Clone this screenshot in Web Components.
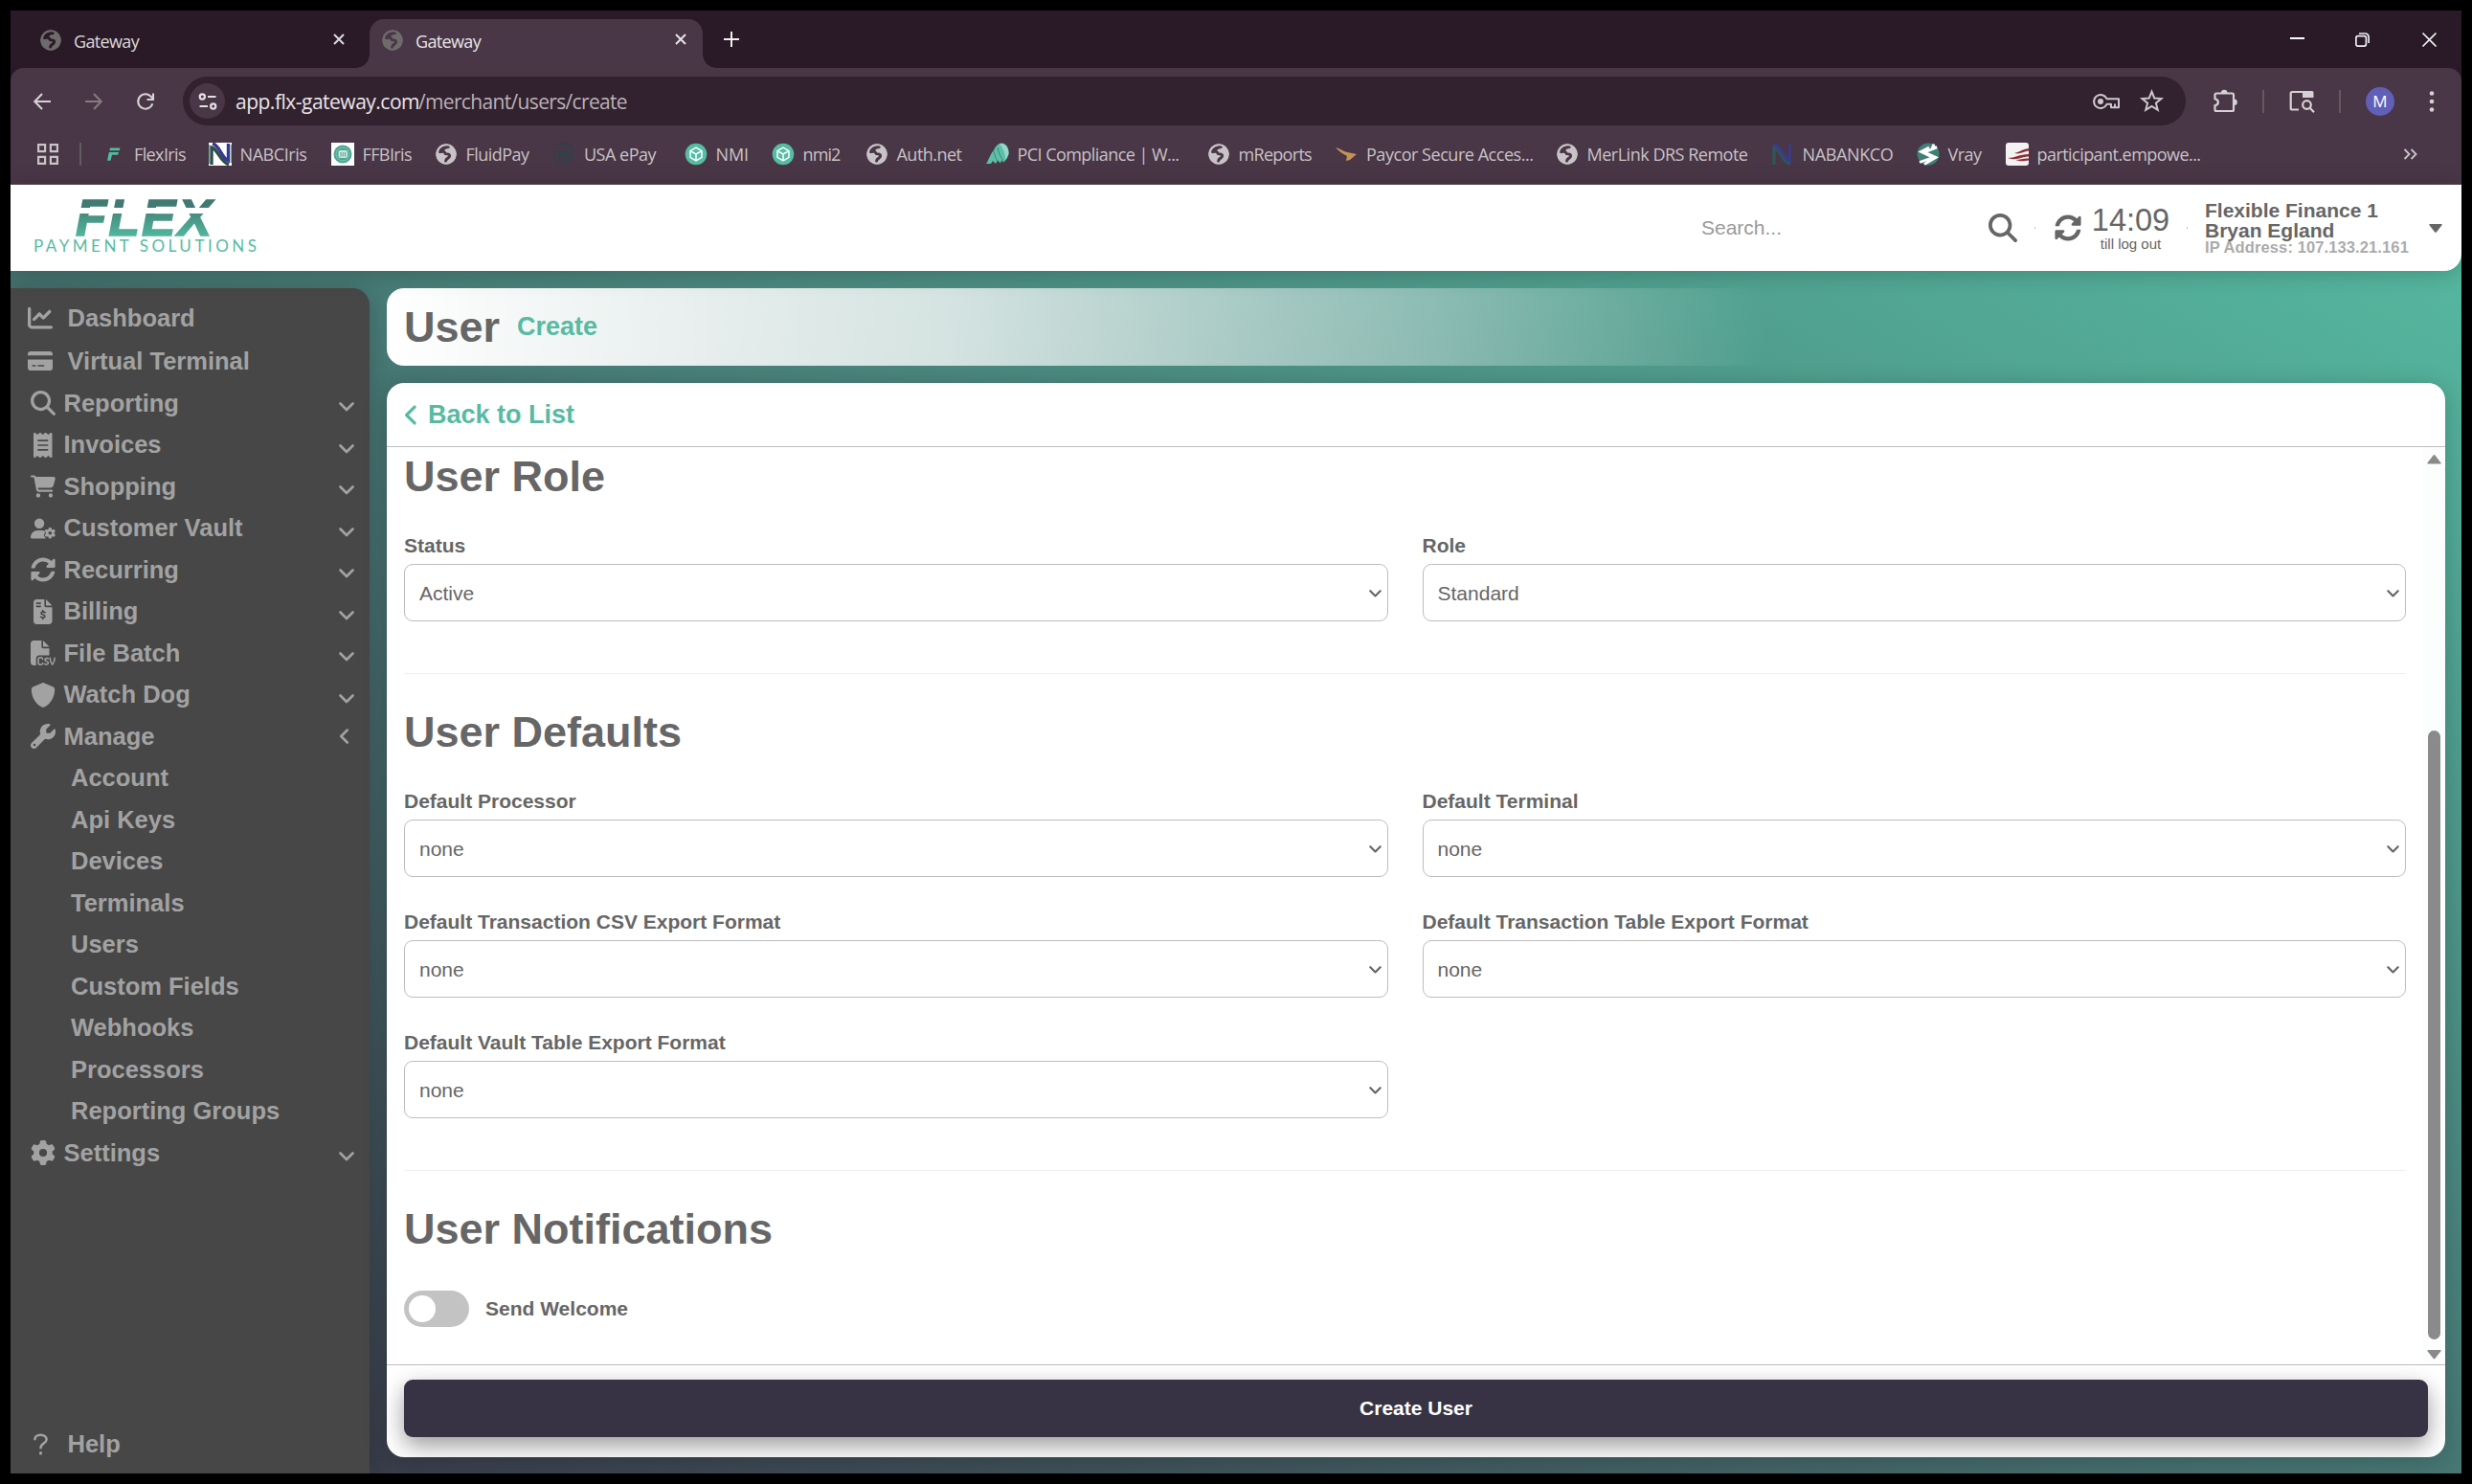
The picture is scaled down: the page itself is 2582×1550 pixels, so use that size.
<!DOCTYPE html>
<html lang="en">
<head>
<meta charset="utf-8">
<title>Gateway</title>
<style>
    html, body { margin: 0; height: 100%; background: #000; }
    body { box-sizing: border-box; padding: 11px; width: 2582px; height: 1550px; overflow: hidden; font-family: "Liberation Sans", Arial, sans-serif; }
</style>
</head>
<body>
<browser-window>
    <browser-tab slot="tabs">Gateway</browser-tab>
    <browser-tab slot="tabs" active>Gateway</browser-tab>
    <address-bar slot="address" host="app.flx-gateway.com" path="/merchant/users/create"></address-bar>
    <book-mark slot="marks" icon="flex" width="110.5" text="53">FlexIris</book-mark>
    <book-mark slot="marks" icon="nabc" width="128" text="69">NABCIris</book-mark>
    <book-mark slot="marks" icon="ffb" width="108" text="50.5">FFBIris</book-mark>
    <book-mark slot="marks" icon="globe" width="123.5" text="65">FluidPay</book-mark>
    <book-mark slot="marks" icon="usa" width="137.5" text="74">USA ePay</book-mark>
    <book-mark slot="marks" icon="nmi" width="91" text="33.5">NMI</book-mark>
    <book-mark slot="marks" icon="nmi" width="98" text="38">nmi2</book-mark>
    <book-mark slot="marks" icon="globe" width="126" text="67">Auth.net</book-mark>
    <book-mark slot="marks" icon="pci" width="231" text="168">PCI Compliance | W...</book-mark>
    <book-mark slot="marks" icon="globe" width="133.5" text="75.5">mReports</book-mark>
    <book-mark slot="marks" icon="paycor" width="230.5" text="173.5">Paycor Secure Acces...</book-mark>
    <book-mark slot="marks" icon="globe" width="225" text="167">MerLink DRS Remote</book-mark>
    <book-mark slot="marks" icon="nabank" width="152" text="94">NABANKCO</book-mark>
    <book-mark slot="marks" icon="vray" width="93" text="34">Vray</book-mark>
    <book-mark slot="marks" icon="empower" width="240" text="170">participant.empowe...</book-mark>

    <merchant-app>
        <app-header slot="header"></app-header>
        <side-nav slot="nav">
            <nav-item icon="chart" top style="height:45px">Dashboard</nav-item>
            <nav-item icon="card" top style="height:45px">Virtual Terminal</nav-item>
            <nav-item icon="search" arrow="down">Reporting</nav-item>
            <nav-item icon="receipt" arrow="down">Invoices</nav-item>
            <nav-item icon="cart" arrow="down">Shopping</nav-item>
            <nav-item icon="usergear" arrow="down">Customer Vault</nav-item>
            <nav-item icon="sync" arrow="down">Recurring</nav-item>
            <nav-item icon="invoice" arrow="down">Billing</nav-item>
            <nav-item icon="csv" arrow="down">File Batch</nav-item>
            <nav-item icon="shield" arrow="down">Watch Dog</nav-item>
            <nav-item icon="wrench" arrow="left">Manage</nav-item>
            <nav-item sub>Account</nav-item>
            <nav-item sub>Api Keys</nav-item>
            <nav-item sub>Devices</nav-item>
            <nav-item sub>Terminals</nav-item>
            <nav-item sub>Users</nav-item>
            <nav-item sub>Custom Fields</nav-item>
            <nav-item sub>Webhooks</nav-item>
            <nav-item sub>Processors</nav-item>
            <nav-item sub>Reporting Groups</nav-item>
            <nav-item icon="gear" arrow="down">Settings</nav-item>
            <nav-item slot="foot" icon="help" top>Help</nav-item>
        </side-nav>
        <page-title slot="main" name="User">Create</page-title>
        <form-card slot="main">
            <form-section heading="User Role">
                <select-field label="Status">Active</select-field>
                <select-field label="Role">Standard</select-field>
            </form-section>
            <form-section heading="User Defaults">
                <select-field label="Default Processor">none</select-field>
                <select-field label="Default Terminal">none</select-field>
                <select-field label="Default Transaction CSV Export Format">none</select-field>
                <select-field label="Default Transaction Table Export Format">none</select-field>
                <select-field label="Default Vault Table Export Format">none</select-field>
            </form-section>
            <form-section heading="User Notifications">
                <toggle-switch>Send Welcome</toggle-switch>
            </form-section>
        </form-card>
    </merchant-app>
</browser-window>

<script>
// [viewBox, markup]
const GEAR = 'M495.9 166.6c3.2 8.7 .5 18.4-6.4 24.6l-43.3 39.4c1.1 8.3 1.7 16.8 1.7 25.4s-.6 17.1-1.7 25.4l43.3 39.4c6.9 6.2 9.6 15.9 6.4 24.6c-4.4 11.9-9.7 23.3-15.8 34.3l-4.7 8.1c-6.6 11-14 21.4-22.1 31.2c-5.9 7.2-15.7 9.6-24.5 6.8l-55.7-17.7c-13.4 10.3-28.2 18.9-44 25.4l-12.5 57.1c-2 9.1-9 16.3-18.2 17.8c-13.8 2.3-28 3.5-42.5 3.5s-28.7-1.2-42.5-3.5c-9.2-1.5-16.2-8.7-18.2-17.8l-12.5-57.1c-15.8-6.5-30.6-15.1-44-25.4L83.1 425.9c-8.8 2.8-18.6 .3-24.5-6.8c-8.1-9.8-15.5-20.2-22.1-31.2l-4.7-8.1c-6.1-11-11.4-22.4-15.8-34.3c-3.2-8.7-.5-18.4 6.4-24.6l43.3-39.4C64.6 273.1 64 264.6 64 256s.6-17.1 1.7-25.4L22.4 191.2c-6.9-6.2-9.6-15.9-6.4-24.6c4.4-11.9 9.7-23.3 15.8-34.3l4.7-8.1c6.6-11 14-21.4 22.1-31.2c5.9-7.2 15.7-9.6 24.5-6.8l55.7 17.7c13.4-10.3 28.2-18.9 44-25.4l12.5-57.1c2-9.1 9-16.3 18.2-17.8C227.3 1.2 241.5 0 256 0s28.7 1.2 42.5 3.5c9.2 1.5 16.2 8.7 18.2 17.8l12.5 57.1c15.8 6.5 30.6 15.1 44 25.4l55.7-17.7c8.8-2.8 18.6-.3 24.5 6.8c8.1 9.8 15.5 20.2 22.1 31.2l4.7 8.1c6.1 11 11.4 22.4 15.8 34.3zM256 336a80 80 0 1 0 0-160 80 80 0 1 0 0 160z';
const ICONS = {
    chart: ['0 0 512 512', '<path d="M64 64c0-17.7-14.3-32-32-32S0 46.3 0 64V400c0 44.2 35.8 80 80 80H480c17.7 0 32-14.3 32-32s-14.3-32-32-32H80c-8.8 0-16-7.2-16-16V64zm406.6 86.6c12.5-12.5 12.5-32.8 0-45.3s-32.8-12.5-45.3 0L320 210.7l-57.4-57.4c-12.5-12.5-32.8-12.5-45.3 0l-112 112c-12.5 12.5-12.5 32.8 0 45.3s32.8 12.5 45.3 0L240 221.3l57.4 57.4c12.5 12.5 32.8 12.5 45.3 0l128-128z"/>'],
    card: ['0 0 576 512', '<path d="M64 32C28.7 32 0 60.7 0 96v32H576V96c0-35.3-28.7-64-64-64H64zM576 224H0V416c0 35.3 28.7 64 64 64H512c35.3 0 64-28.7 64-64V224zM112 352h64c8.8 0 16 7.2 16 16s-7.2 16-16 16H112c-8.8 0-16-7.2-16-16s7.2-16 16-16zm112 16c0-8.8 7.2-16 16-16H368c8.8 0 16 7.2 16 16s-7.2 16-16 16H240c-8.8 0-16-7.2-16-16z"/>'],
    search: ['0 0 512 512', '<path d="M416 208c0 45.9-14.9 88.3-40 122.7L502.6 457.4c12.5 12.5 12.5 32.8 0 45.3s-32.8 12.5-45.3 0L330.7 376c-34.4 25.2-76.8 40-122.7 40C93.1 416 0 322.9 0 208S93.1 0 208 0S416 93.1 416 208zM208 352a144 144 0 1 0 0-288 144 144 0 1 0 0 288z"/>'],
    receipt: ['0 0 384 512', '<path d="M14 2.2C22.5-1.7 32.5-.3 39.6 5.8L80 40.4 120.4 5.8c9-7.7 22.3-7.7 31.2 0L192 40.4 232.4 5.8c9-7.7 22.3-7.7 31.2 0L304 40.4 344.4 5.8c7.1-6.1 17.1-7.5 25.6-3.6s14 12.4 14 21.8V488c0 9.4-5.5 17.9-14 21.8s-18.5 2.5-25.6-3.6L304 471.6l-40.4 34.6c-9 7.7-22.3 7.7-31.2 0L192 471.6l-40.4 34.6c-9 7.7-22.3 7.7-31.2 0L80 471.6 39.6 506.2c-7.1 6.1-17.1 7.5-25.6 3.6S0 497.4 0 488V24C0 14.6 5.5 6.1 14 2.2zM96 144c-8.8 0-16 7.2-16 16s7.2 16 16 16H288c8.8 0 16-7.2 16-16s-7.2-16-16-16H96zM80 352c0 8.8 7.2 16 16 16H288c8.8 0 16-7.2 16-16s-7.2-16-16-16H96c-8.8 0-16 7.2-16 16zM96 240c-8.8 0-16 7.2-16 16s7.2 16 16 16H288c8.8 0 16-7.2 16-16s-7.2-16-16-16H96z"/>'],
    cart: ['0 0 576 512', '<path d="M0 24C0 10.7 10.7 0 24 0H69.5c22 0 41.5 12.8 50.6 32h411c26.3 0 45.5 25 38.6 50.4l-41 152.3c-8.5 31.4-37 53.3-69.5 53.3H170.7l5.4 28.5c2.2 11.3 12.1 19.5 23.6 19.5H488c13.3 0 24 10.7 24 24s-10.7 24-24 24H199.7c-34.6 0-64.3-24.6-70.7-58.5L77.4 54.5c-.7-3.8-4-6.5-7.9-6.5H24C10.7 48 0 37.3 0 24zM128 464a48 48 0 1 1 96 0 48 48 0 1 1 -96 0zm336-48a48 48 0 1 1 0 96 48 48 0 1 1 0-96z"/>'],
    usergear: ['0 0 640 512', `<circle cx="224" cy="128" r="128"/><path d="M178.3 304C79.8 304 0 383.8 0 482.3C0 498.7 13.3 512 29.7 512H390c-22-24-38-52-46-84c-6-22 8-38 24-50c-6-16-6-36 4-58c-22-10-60-16-102-16z"/><g transform="translate(356 230) scale(.56)"><path d="${GEAR}"/></g>`],
    sync: ['0 0 512 512', '<path d="M370.7 133.3C339.5 104 298.9 88 255.8 88c-77.5.1-144.3 53.2-162.8 126.9-1.3 5.4-6.1 9.1-11.6 9.1H24.1c-7.5 0-13.2-6.8-11.8-14.2C33.9 94.9 134.8 8 256 8c66.4 0 126.8 26.1 171.3 68.7L463 41C478.1 25.9 504 36.6 504 57.9V192c0 13.3-10.7 24-24 24H345.9c-21.4 0-32.1-25.9-17-41l41.8-41.7zM32 296h134.1c21.4 0 32.1 25.9 17 41l-41.8 41.7c31.3 29.3 71.9 45.3 114.9 45.3 77.4-.1 144.3-53.1 162.8-126.8 1.3-5.4 6.1-9.2 11.6-9.2h57.3c7.5 0 13.2 6.8 11.8 14.2C478.1 417.1 377.2 504 256 504c-66.4 0-126.8-26.1-171.3-68.7L49 471C33.9 486.1 8 475.4 8 454.1V320c0-13.3 10.7-24 24-24z"/>'],
    invoice: ['0 0 384 512', '<path fill-rule="evenodd" d="M64 0C28.7 0 0 28.7 0 64V448c0 35.3 28.7 64 64 64H320c35.3 0 64-28.7 64-64V160H256c-17.7 0-32-14.3-32-32V0H64zM256 0V128H384L256 0zM64 64h80c20 0 20 32 0 32H64c-20 0-20-32 0-32zm0 64h80c20 0 20 32 0 32H64c-20 0-20-32 0-32z"/><path d="M240 270c-18-10-80-22-84 12c-4 40 78 24 80 62c2 40-66 34-88 18M192 226v32M192 370v34" fill="none" stroke="#474747" stroke-width="32" stroke-linecap="round"/>'],
    csv: ['0 0 512 512', '<path d="M0 64C0 28.7 28.7 0 64 0H224V128c0 17.7 14.3 32 32 32H384V304H176c-35.3 0-64 28.7-64 64V512H64c-35.3 0-64-28.7-64-64V64zM384 128H256V0L384 128z"/><g fill="none" stroke="currentColor" stroke-width="30" stroke-linecap="round"><path d="M248 384c-4-46-90-46-90 6v68c0 52 86 52 90 6"/><path d="M362 370c-62-24-92 40-40 56c70 18 46 84-36 58"/><path d="M400 358c0 50 12 100 46 136c34-36 48-86 48-136"/></g>'],
    shield: ['0 0 512 512', '<path d="M256 0c4.6 0 9.2 1 13.4 2.9L457.7 82.8c22 9.3 38.4 31 38.3 57.2c-.5 99.2-41.3 280.7-213.6 363.2c-16.7 8-36.1 8-52.8 0C57.3 420.7 16.5 239.2 16 140c-.1-26.2 16.3-47.9 38.3-57.2L242.7 2.9C246.8 1 251.4 0 256 0z"/>'],
    wrench: ['0 0 512 512', '<path d="M352 320c88.4 0 160-71.6 160-160c0-15.3-2.2-30.1-6.2-44.2c-3.1-10.8-16.4-13.2-24.3-5.3l-76.8 76.8c-3 3-7.1 4.7-11.3 4.7H336c-8.8 0-16-7.2-16-16V118.6c0-4.2 1.7-8.3 4.7-11.3l76.8-76.8c7.9-7.9 5.4-21.2-5.3-24.3C382.1 2.2 367.3 0 352 0C263.6 0 192 71.6 192 160c0 19.1 3.4 37.5 9.5 54.5L19.9 396.1C7.2 408.8 0 426.1 0 444.1C0 481.6 30.4 512 67.9 512c18 0 35.3-7.2 48-19.9L297.5 310.5c17 6.2 35.4 9.5 54.5 9.5zM80 408a24 24 0 1 1 0 48 24 24 0 1 1 0-48z"/>'],
    gear: ['0 0 512 512', `<path d="${GEAR}"/>`],
    help: ['0 0 16 24', '<g fill="none" stroke="currentColor" stroke-width="2.7" stroke-linecap="round"><path d="M1.5 6.5C1.5 3.5 4 1.5 7.8 1.5s6.7 1.9 6.7 5.2c0 4.3-6.5 4.3-6.5 9.3"/><path d="M8 21.8v.2" stroke-width="3.4"/></g>'],
    down: ['0 0 16 10', '<path d="M1.5 1.5L8 8l6.5-6.5" fill="none" stroke="currentColor" stroke-width="2.7" stroke-linecap="round" stroke-linejoin="round"/>'],
    left: ['0 0 10 16', '<path d="M8.5 1.5L2 8l6.5 6.5" fill="none" stroke="currentColor" stroke-width="2.5" stroke-linecap="round" stroke-linejoin="round"/>'],
    x: ['0 0 12 12', '<path d="M1 1l10 10M11 1L1 11" fill="none" stroke="currentColor" stroke-width="2"/>'],
    plus: ['0 0 16 16', '<path d="M8 0v16M0 8h16" fill="none" stroke="currentColor" stroke-width="2"/>'],
    restore: ['0 0 15 15', '<g fill="none" stroke="currentColor" stroke-width="1.7"><rect x=".9" y="3.6" width="10.5" height="10.5" rx="2"/><path d="M4 1h6.5a3.6 3.6 0 0 1 3.6 3.6V11"/></g>'],
    close: ['0 0 15 15', '<path d="M.5.5l14 14M14.5.5l-14 14" fill="none" stroke="currentColor" stroke-width="1.7"/>'],
    back: ['0 0 18 18', '<path d="M18 9H1.500M9 1L1.300 9 9 17" fill="none" stroke="currentColor" stroke-width="2.1"/>'],
    reload: ['0 0 18 18', '<g fill="none" stroke="currentColor" stroke-width="2.1"><path d="M16.3 11.2A7.7 7.7 0 1 1 15 4.2L17 6.6"/><path d="M17 .5v6.500h-6.500"/></g>'],
    tune: ['0 0 20 18', '<g fill="none" stroke="currentColor" stroke-width="2.2"><circle cx="4.3" cy="4" r="2.6"/><path d="M10 4h8.5M1.5 14H10"/><circle cx="15.7" cy="14" r="2.6"/></g>'],
    key: ['0 0 28 16', '<g fill="none" stroke="currentColor" stroke-width="2" stroke-linejoin="round"><path d="M14.5 5.200A7 7 0 1 0 14.500 10.800H19V14.200H27V5.200z"/><path d="M23 14v-3.500"/></g><circle cx="8" cy="8" r="3"/>'],
    star: ['0 0 24 24', '<path d="M12 2.5l2.6 6.600 7 .5-5.400 4.500 1.800 6.900-6-3.800-6 3.800 1.800-6.900-5.400-4.500 7-.5z" fill="none" stroke="currentColor" stroke-width="1.9"/>'],
    ext: ['0 0 25 25', '<path d="M3 4.500h16.500a1.500 1.500 0 0 1 1.500 1.500V21.500a1.500 1.500 0 0 1-1.500 1.500H3a1.500 1.500 0 0 1-1.500-1.500V17.200c4.500-1 4.500-6 0-7V6A1.500 1.500 0 0 1 3 4.500z" fill="none" stroke="currentColor" stroke-width="2.2"/><path d="M8 4a3.200 3.200 0 0 1 6.400 0zM21.600 10.500a3.200 3.200 0 0 1 0 6.400z"/>'],
    lens: ['0 0 27 24', '<g fill="none" stroke="currentColor" stroke-width="2.2"><path d="M10 20.500H3.200a1.500 1.500 0 0 1-1.500-1.500V3.500A1.500 1.500 0 0 1 3.200 2H24"/><circle cx="18.500" cy="15.500" r="4.300"/><path d="M21.700 18.800L26 23.200"/></g><path d="M14 1h10a1.500 1.500 0 0 1 1.500 1.500V8H14z"/>'],
    dots: ['0 0 6 22', '<circle cx="3" cy="2.5" r="2.3"/><circle cx="3" cy="11" r="2.3"/><circle cx="3" cy="19.5" r="2.3"/>'],
    apps: ['0 0 22 22', '<path d="M1.1 1.1h7v7h-7zM13.9 1.1h7v7h-7zM1.1 13.9h7v7h-7zM13.9 13.9h7v7h-7z" fill="none" stroke="currentColor" stroke-width="2.2"/>'],
    more: ['0 0 15 12', '<path d="M1.5 1l5 5-5 5M8.5 1l5 5-5 5" fill="none" stroke="currentColor" stroke-width="1.9"/>'],
    globe: ['0 0 24 24', '<mask id="land"><path fill="#fff" d="M0 0h24v24H0z"/><g fill="none" stroke="#000" stroke-width="3.200" stroke-linecap="round" stroke-linejoin="round"><path d="M14.500 3.800C9 4.500 6.500 6 5 9.500c3.500-1 5.500-.5 6 2 1.500.8 5-.5 5 2.500s-4 2-4.500 5.800"/></g><path d="M3.500 8.500C5 4.500 9 2.500 13.500 2.800L10 8z" fill="#000"/></mask><circle cx="12" cy="12" r="11.500" mask="url(#land)"/><circle cx="12" cy="12" r="10.700" fill="none" stroke="currentColor" stroke-width="2"/>'],
    flex: ['0 0 24 24', '<g fill="#52bda1"><path d="M8 5.5h10.500l-.7 2.800H7.300zM6.900 10h10l-.7 2.800H10l-1.500 6H5z"/></g>'],
    nabc: ['0 0 24 24', '<path fill="#fff" d="M0 0h24v24H0z"/><path d="M3 23V5c6 1 9 15 18 18" fill="none" stroke="#2f4d4a" stroke-width="3.4"/><path d="M4 1c8 2 9 15 16.500 18V1" fill="none" stroke="#383890" stroke-width="3.4"/><path d="M.7 22V2M23.300 2v19" stroke="#4aa08e" stroke-width="1"/>'],
    ffb: ['0 0 24 24', '<path fill="#fff" d="M0 0h24v24H0z"/><circle cx="12" cy="12" r="9.5" fill="#4ca593"/><circle cx="12" cy="12" r="7" fill="none" stroke="#8dcbbd" stroke-width=".8"/><rect x="7.5" y="8" width="9.5" height="8" rx="2" fill="#c9e6df"/><path d="M10 10v4.500M12.200 10v4.500M14.500 10v4.500" stroke="#4ca593" stroke-width="1"/>'],
    usa: ['0 0 24 24', '<g fill="none" stroke="#2e4149" stroke-width="2"><path d="M3 3.5C10-.5 22 1 22 10c0 9-12 14-20 9"/><path d="M2 8v5c0 3 6 3 6 0V8M11 12h6c0-5-6-5-6-.5 0 5 4 5 6 3" stroke-width="1.9"/></g>'],
    nmi: ['0 0 24 24', '<circle cx="12" cy="12" r="11.3" fill="#55bda2"/><g fill="none" stroke="#fff" stroke-width="1.5" stroke-linejoin="round"><path d="M12 5.2l6 3.400v6.800l-6 3.400-6-3.400V8.600z"/><path d="M6 8.600l6 3.400 6-3.400M12 12v6.800"/></g>'],
    pci: ['0 0 24 24', '<path d="M0 22C3 18 4 12 8 8c2-5 5-7.500 9-7.500 5 1 7 6 6.500 11-.5 4-2.500 7-5.500 9l-2-2-1 3-3-3-2 3.500-3-3-2 3z" fill="#5cc0a8"/><path d="M14 1c6-1 10 5 9.500 11L20 18c0-7-2-12-6-17z" fill="#9ad5ca"/><path d="M8 9c1 4 2 8 4 11M12 5c1 5 3 10 6 14" fill="none" stroke="#3c7d75" stroke-width=".9"/>'],
    paycor: ['0 0 24 24', '<path d="M1 5c4 1 8 4 12 5l10 2-7 6-4 1 1-5C9 12 4 9 1 5z" fill="#c69355"/>'],
    nabank: ['0 0 24 24', '<g fill="none" stroke-width="3.4"><path d="M3 23V5c7 1 8 15 17 17.500" stroke="#2f565a"/><path d="M3 2c8 2 9 13 16.500 17V2" stroke="#3b3b86"/></g>'],
    vray: ['0 0 24 24', '<circle cx="12" cy="12" r="11.5" fill="#3f7f75"/><path d="M18 1.500l-1.500 3.500h4.500L8 10l12 5.500L8 22.500M13 5L4.500 9.500 17 15.500 3 20.500" fill="none" stroke="#fff" stroke-width="2.8"/>'],
    empower: ['0 0 24 24', '<rect width="24" height="24" rx="3" fill="#f3f3f3"/><path d="M9 11c5-1 8-4 15-5v2.500C18 9.500 15 12.500 9 11zM2 16c8 0 12-4 22-4v2.500c-7 0-12 5-22 1.500zM10 18c5 0 9-2 14-1.500v2c-5 .5-8 1.500-14-.5z" fill="#8c2f38"/>'],
    caret: ['0 0 14 9', '<path d="M1 0h12q1.2.3.5 1.300L7.800 8.500q-.8.9-1.600 0L.5 1.300Q-.2.3 1 0z"/>']
};

const base = `<style>
    :host { display: block; box-sizing: border-box; }
    *, ::slotted(*) { box-sizing: border-box; }
</style>`;

class Base extends HTMLElement {
    constructor() {
        super();
        this.attachShadow({mode: 'open'});
    }
    connectedCallback() {
        this.shadowRoot.innerHTML = base + this.render();
    }
    attr(name) {
        return this.getAttribute(name) || '';
    }
}

customElements.define('ui-icon', class extends Base {
    render() {
        const [box, body] = ICONS[this.attr('name')];
        return `<style>
            :host { display: block; flex: none; width: ${this.attr('w')}px; height: ${this.attr('h') || this.attr('w')}px; }
            svg { display: block; width: 100%; height: 100%; fill: currentColor; overflow: visible; }
        </style><svg viewBox="${box}">${body}</svg>`;
    }
});

// Tracks its text out (or in) until the line is as wide as asked
customElements.define('fit-text', class extends Base {
    render() {
        return `<style>
            :host { display: block; flex: none; white-space: pre; width: ${this.attr('w')}px; }
            span { display: inline-block; }
        </style><span><slot></slot></span>`;
    }
    connectedCallback() {
        super.connectedCallback();
        const span = this.shadowRoot.querySelector('span');
        const spare = parseFloat(this.attr('w')) + 1 - span.getBoundingClientRect().width;
        span.style.letterSpacing = spare / this.textContent.length + 'px';
    }
});

customElements.define('browser-tab', class extends Base {
    render() {
        return `<style>
            :host { height: 51px; margin-top: 9px; width: 348px; padding: 0 17px 0 13px; display: flex; align-items: center; position: relative;
                font: 18px "Open Sans", sans-serif; color: #dcd8da; border-radius: 15px 15px 0 0; }
            :host([active]) { background: #493646; color: #e8e4e6; }
            :host([active])::before, :host([active])::after { content: ""; position: absolute; bottom: 0; width: 14px; height: 14px; }
            :host([active])::before { right: 100%; background: radial-gradient(circle at 0 0, transparent 13.5px, #493646 14px); }
            :host([active])::after { left: 100%; background: radial-gradient(circle at 100% 0, transparent 13.5px, #493646 14px); }
            .globe { color: #6f6b6b; margin-right: 13px; margin-top: -8px; }
            fit-text { flex: 1; margin-top: -6px; }
            .x { margin-top: -9px; }
        </style>
        <ui-icon class="globe" name="globe" w="22"></ui-icon>
        <fit-text w="67">${this.textContent}</fit-text>
        <ui-icon class="x" name="x" w="12"></ui-icon>`;
    }
});

customElements.define('address-bar', class extends Base {
    render() {
        return `<style>
            :host { height: 51px; width: 2092px; border-radius: 26px; background: #32212f; display: flex; align-items: center; padding: 0 23px 0 7px; color: #cdc8cb; }
            .site { width: 37px; height: 37px; border-radius: 50%; background: #493646; color: #e3e0e2; display: grid; place-items: center; margin-right: 11px; }
            fit-text { font: 21px "Open Sans", sans-serif; color: #b9b2b6; }
            fit-text.host { color: #e9e5e7; }
            .key { margin-left: auto; margin-right: 21px; }
        </style>
        <div class="site"><ui-icon name="tune" w="20" h="18"></ui-icon></div>
        <fit-text class="host" w="191">${this.attr('host')}</fit-text>
        <fit-text w="217">${this.attr('path')}</fit-text>
        <ui-icon class="key" name="key" w="28" h="16"></ui-icon>
        <ui-icon name="star" w="25"></ui-icon>`;
    }
});

customElements.define('book-mark', class extends Base {
    render() {
        const globe = this.attr('icon') == 'globe';
        return `<style>
            :host { display: flex; flex: none; align-items: center; gap: 9px; width: ${this.attr('width')}px; font: 18px "Open Sans", sans-serif; color: #c8c3c6; }
        </style>
        <ui-icon name="${this.attr('icon')}" w="${globe ? 22 : 24}" style="margin:0 ${globe ? 1 : 0}px"></ui-icon>
        <fit-text w="${this.attr('text')}">${this.textContent}</fit-text>`;
    }
});

customElements.define('browser-window', class extends Base {
    render() {
        return `<style>
            :host { width: 2560px; height: 1528px; display: flex; flex-direction: column; background: #2a1a28; overflow: hidden; }
            .tabs { height: 60px; display: flex; padding-left: 18px; align-items: center; color: #eee; flex: none; }
            ::slotted(browser-tab) { margin-right: 9px; }
            .plus { margin-left: 13px; }
            .min { width: 15px; height: 2px; background: #fff; margin-left: auto; margin-top: -2px; }
            .restore { margin: 0 55px 0 53px; }
            .close { margin-right: 26px; }
            .bars { background: #493646; border-radius: 14px 14px 0 0; height: 121px; flex: none; }
            .tool { display: flex; align-items: center; height: 69px; padding: 0 27px 0 24px; color: #d6d2d4; }
            .fwd { transform: scaleX(-1); margin: 0 36px; color: #857a82; }
            .reload { margin-right: 30px; }
            .sep { width: 2px; height: 24px; background: #625b60; }
            .avatar { width: 30px; height: 30px; border-radius: 50%; background: #625fb8; color: #fff; font: 17px/30px "Open Sans", sans-serif; text-align: center; margin: 0 36px 0 26px; }
            .marks { display: flex; align-items: center; height: 42px; padding: 0 46px 0 28px; color: #c8c3c6; }
            .marks .sep { margin: 0 22px; }
            .more { margin-left: auto; }
            main { flex: 1; min-height: 0; border-top: 1px solid #5a4957; }
        </style>
        <div class="tabs">
            <slot name="tabs"></slot>
            <ui-icon class="plus" name="plus" w="16"></ui-icon>
            <div class="min"></div>
            <ui-icon class="restore" name="restore" w="15"></ui-icon>
            <ui-icon class="close" name="close" w="15"></ui-icon>
        </div>
        <div class="bars">
            <div class="tool">
                <ui-icon name="back" w="18"></ui-icon>
                <ui-icon class="fwd" name="back" w="18"></ui-icon>
                <ui-icon class="reload" name="reload" w="18"></ui-icon>
                <slot name="address"></slot>
                <ui-icon name="ext" w="25" style="margin:0 26px 0 29px"></ui-icon>
                <div class="sep"></div>
                <ui-icon name="lens" w="27" h="24" style="margin:0 25px 0 26px"></ui-icon>
                <div class="sep"></div>
                <div class="avatar">M</div>
                <ui-icon name="dots" w="6" h="22"></ui-icon>
            </div>
            <div class="marks">
                <ui-icon name="apps" w="22"></ui-icon>
                <div class="sep"></div>
                <slot name="marks"></slot>
                <ui-icon class="more" name="more" w="15" h="12"></ui-icon>
            </div>
        </div>
        <main><slot></slot></main>`;
    }
});

customElements.define('merchant-app', class extends Base {
    render() {
        return `<style>
            :host { height: 1346px; background: linear-gradient(to top right, #383344, #56bba2);
                display: grid; grid-template: 90px 1256px / 375px 1fr; color: #666; }
            slot[name=header] { display: block; grid-column: 1 / 3; position: relative; z-index: 1; }
            .nav { padding-top: 18px; }
            .main { padding: 18px 17px 17px 18px; display: flex; flex-direction: column; gap: 18px; }
        </style>
        <slot name="header"></slot>
        <div class="nav"><slot name="nav"></slot></div>
        <div class="main"><slot name="main"></slot></div>`;
    }
});

customElements.define('flex-logo', class extends Base {
    render() {
        return `<style>:host { width: 236px; height: 60px; margin-top: -6px; } svg { display: block; overflow: visible; }</style>
        <svg width="236" height="60" viewBox="0 0 236 60">
            <defs>
                <linearGradient id="g" gradientUnits="userSpaceOnUse" x1="0" y1="4" x2="0" y2="42">
                    <stop offset="0" stop-color="#417a72"/><stop offset=".21" stop-color="#417a72"/>
                    <stop offset=".21" stop-color="#fff"/><stop offset=".38" stop-color="#fff"/>
                    <stop offset=".38" stop-color="#478c80"/><stop offset="1" stop-color="#52b79e"/>
                </linearGradient>
            </defs>
            <text x="43" y="41" font-family="Liberation Sans" font-weight="700" font-style="italic" font-size="53" textLength="142" lengthAdjust="spacing" fill="url(#g)" stroke="url(#g)" stroke-width="1.6">FLEX</text>
            <text x="-1" y="58" font-family="Lato" font-size="17" textLength="233" lengthAdjust="spacing" fill="#56bba2">PAYMENT SOLUTIONS</text>
        </svg>`;
    }
});

customElements.define('app-header', class extends Base {
    render() {
        return `<style>
            :host { height: 90px; background: #fff; border-radius: 0 0 18px 0; box-shadow: 0 3px 24px rgba(0,0,0,.2); display: flex; align-items: center; padding: 0 20px 0 25px; color: #666; }
            .find { margin-left: auto; font-size: 21px; color: #9a9a9a; width: 300px; }
            .dot { width: 1px; height: 2px; background: #bbb; }
            .clock { width: 79px; margin: 2px 1px 0 12px; white-space: nowrap; display: flex; flex-direction: column; align-items: center; }
            .clock b { font: 32.5px/30px "Liberation Sans", sans-serif; }
            .clock span { font-size: 15px; line-height: 19px; }
            .who { width: 214px; margin: -1px 20px 0 18px; font: bold 21px/21px "Liberation Sans", sans-serif; white-space: nowrap; }
            .who small { display: block; font-size: 16.5px; line-height: 15px; letter-spacing: .11px; color: #ababab; }
        </style>
        <flex-logo></flex-logo>
        <div class="find">Search...</div>
        <ui-icon name="search" w="30"></ui-icon>
        <div class="dot" style="margin:0 20px 0 18px"></div>
        <ui-icon name="sync" w="28"></ui-icon>
        <div class="clock"><b>14:09</b><span>till log out</span></div>
        <div class="dot" style="margin-left:18px"></div>
        <div class="who">Flexible Finance 1<br>Bryan Egland<small>IP Address: 107.133.21.161</small></div>
        <ui-icon name="caret" w="14" h="9"></ui-icon>`;
    }
});

customElements.define('nav-item', class extends Base {
    render() {
        const icon = this.attr('icon'), arrow = this.attr('arrow');
        const narrow = icon == 'receipt' || icon == 'invoice';
        return `<style>
            :host { display: flex; flex: none; align-items: center; height: 43.5px; padding: 0 16px 0 21px; font: bold 25.5px/43px "Liberation Sans", sans-serif; color: #a2a2a2; white-space: nowrap; }
            :host([top]) { padding-left: 18px; }
            :host([sub]) { padding-left: 63px; }
            .ico { width: 25px; display: grid; place-items: center; margin-right: 9.5px; }
            :host([top]) .ico { width: 26px; margin-right: 15.5px; }
            .arrow { margin-left: auto; margin-top: 8px; }
            .arrow[name=left] { margin-right: 6px; margin-top: 0; }
        </style>
        ${icon ? `<div class="ico"><ui-icon name="${icon}" w="${icon == 'help' ? 15 : narrow ? 19.5 : 26}" h="${icon == 'help' ? 23 : 26}"></ui-icon></div>` : ''}
        <slot></slot>
        ${arrow ? `<ui-icon class="arrow" name="${arrow}" w="${arrow == 'down' ? 16 : 10.5}" h="${arrow == 'down' ? 10 : 16}"></ui-icon>` : ''}`;
    }
});

customElements.define('side-nav', class extends Base {
    render() {
        return `<style>
            :host { height: 1238px; background: #474747; border-radius: 0 18px 0 0; padding: 8.7px 0 9px; display: flex; flex-direction: column; box-shadow: 0 3px 24px rgba(0,0,0,.2); }
            .foot { margin-top: auto; }
        </style>
        <slot></slot>
        <div class="foot"><slot name="foot"></slot></div>`;
    }
});

customElements.define('page-title', class extends Base {
    render() {
        return `<style>
            :host { height: 81px; flex: none; border-radius: 18px; padding: 0 18px; display: flex; align-items: center; gap: 18px; font: bold 27px/31px "Liberation Sans", sans-serif; color: #57bba2;
                background: linear-gradient(90deg, #fff 0, rgba(255,255,255,.84) 18.5%, rgba(255,255,255,.76) 27.5%, rgba(255,255,255,.58) 38%, rgba(255,255,255,.35) 51%, rgba(255,255,255,0) 67%); }
            h1 { margin: 0; font-size: 45px; line-height: 81px; color: #666; }
        </style>
        <h1>${this.attr('name')}</h1><slot></slot>`;
    }
});

customElements.define('form-card', class extends Base {
    render() {
        return `<style>
            :host { height: 1122px; background: #fff; border-radius: 18px; box-shadow: 0 3px 24px rgba(0,0,0,.2); display: flex; flex-direction: column; overflow: hidden; }
            .back { height: 67px; flex: none; border-bottom: 1px solid #bdbdbd; display: flex; align-items: center; padding: 0 18px; gap: 12px; font: bold 27px "Liberation Sans", sans-serif; color: #57bba2; }
            .scroll { flex: 1; min-height: 0; display: flex; }
            .body { flex: 1; padding: 0 18px; }
            .rail { width: 23px; background: #fcfefd; display: flex; flex-direction: column; align-items: center; padding: 7px 0 5px; color: #8a8a8a; }
            .thumb { width: 13px; height: 636px; border-radius: 7px; background: #8a8a8a; margin: auto 0 10px; }
            .up { transform: scaleY(-1); }
            .foot { flex: none; height: 97px; border-top: 1px solid #bdbdbd; padding: 15px 18px 0; }
            button { display: block; width: 100%; height: 60px; border: 0; border-radius: 9px; background: #383344; color: #fff; font: bold 21px "Liberation Sans", sans-serif; box-shadow: 0 9px 24px rgba(0,0,0,.4); }
        </style>
        <div class="back"><ui-icon name="left" w="13" h="21"></ui-icon>Back to List</div>
        <div class="scroll">
            <div class="body"><slot></slot></div>
            <div class="rail">
                <ui-icon class="up" name="caret" w="15" h="11.5"></ui-icon>
                <div class="thumb"></div>
                <ui-icon name="caret" w="15" h="11.5"></ui-icon>
            </div>
        </div>
        <div class="foot"><button>Create User</button></div>`;
    }
});

customElements.define('form-section', class extends Base {
    render() {
        return `<style>
            :host { width: 2091px; padding-bottom: 54px; }
            :host(:not(:last-child)) { border-bottom: 1px solid #efefef; }
            :host(:not(:first-child)) { padding-top: 30px; }
            h2 { margin: 0; font: bold 45px/62px "Liberation Sans", sans-serif; }
            .grid { display: grid; grid-template-columns: 1fr 1fr; column-gap: 36px; row-gap: 30px; padding-top: 24px; }
        </style>
        <h2>${this.attr('heading')}</h2>
        <div class="grid"><slot></slot></div>`;
    }
});

customElements.define('select-field', class extends Base {
    render() {
        return `<style>
            :host { height: 96px; font-size: 21px; color: #666; }
            label { display: block; font-weight: bold; line-height: 33px; height: 36px; }
            .box { height: 60px; border: 1px solid #bdbdbd; border-radius: 9px; display: flex; align-items: center; justify-content: space-between; padding: 1px 6px 0 15px; }
        </style>
        <label>${this.attr('label')}</label>
        <div class="box"><slot></slot><ui-icon name="down" w="13" h="8"></ui-icon></div>`;
    }
});

customElements.define('toggle-switch', class extends Base {
    render() {
        return `<style>
            :host { display: flex; align-items: center; gap: 17px; margin-top: 9px; font: bold 21px "Liberation Sans", sans-serif; color: #666; }
            .track { width: 68px; height: 38px; border-radius: 19px; background: #c3c3c3; padding: 5px; }
            .track::before { content: ""; display: block; width: 28px; height: 28px; border-radius: 50%; background: #fff; }
        </style>
        <div class="track"></div><slot></slot>`;
    }
});
</script>
</body>
</html>
